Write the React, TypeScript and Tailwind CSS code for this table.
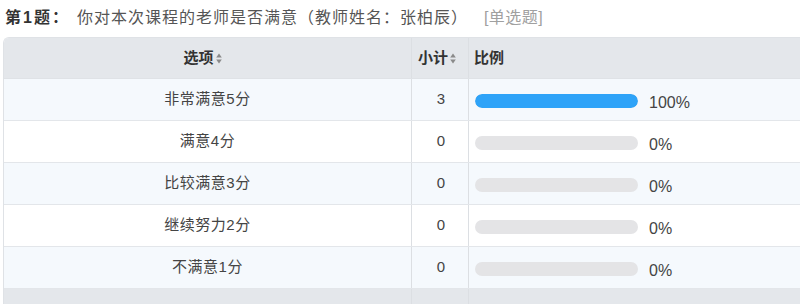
import React from "react";

const rows = [
  { label: "非常满意5分", count: 3, pct: 100 },
  { label: "满意4分", count: 0, pct: 0 },
  { label: "比较满意3分", count: 0, pct: 0 },
  { label: "继续努力2分", count: 0, pct: 0 },
  { label: "不满意1分", count: 0, pct: 0 },
];

const SortIcon = () => (
  <svg width="6" height="11" viewBox="0 0 6 11" className="ml-[2px] inline-block">
    <path d="M3 0.5 L5.8 4.5 L0.2 4.5 Z" fill="#8a8a8a" />
    <path d="M3 10.5 L5.8 6.5 L0.2 6.5 Z" fill="#8a8a8a" />
  </svg>
);

const App: React.FC = () => {
  return (
    <div
      className="w-[800px] h-[304px] overflow-hidden bg-white text-[#333]"
      style={{ fontFamily: '"Liberation Sans", "Noto Sans CJK SC", sans-serif' }}
    >
      {/* title */}
      <div className="flex items-center h-[37px] pl-[5px] pb-[1px]">
        <span className="text-[16px] font-bold text-[#333] leading-none tracking-[2px]">第1题：</span>
        <span className="ml-[7px] text-[16px] text-[#555] leading-none tracking-[1px]">
          你对本次课程的老师是否满意（教师姓名：张柏辰）
        </span>
        <span className="ml-[16px] text-[16px] text-[#a0a0a0] leading-none tracking-[0.5px]">[单选题]</span>
      </div>

      {/* table */}
      <div className="ml-[3px] w-[830px] border-l border-t border-[#dfe2e6] rounded-tl-[6px] overflow-hidden">
        <div className="flex h-[41px] bg-[#e4e7eb] border-b border-[#dfe2e6] text-[15px] font-bold">
          <div className="w-[408px] border-r border-[#dcdfe3] flex items-center justify-center pr-[10px]">
            选项<SortIcon />
          </div>
          <div className="w-[57px] border-r border-[#dcdfe3] flex items-center justify-center pr-[6px]">
            小计<SortIcon />
          </div>
          <div className="flex-1 flex items-center pl-[5px]">比例</div>
        </div>
        {rows.map((r, i) => (
          <div
            key={r.label}
            className={`flex h-[42px] border-b border-[#e3e6ea] ${i % 2 === 0 ? "bg-[#f5f9fd]" : "bg-white"}`}
          >
            <div className="w-[408px] border-r border-[#dcdfe3] flex items-center justify-center text-[15px] tracking-[0.5px] text-[#444]">
              {r.label}
            </div>
            <div className="w-[57px] border-r border-[#dcdfe3] flex items-center justify-center text-[15px] text-[#444] pl-[2px]">
              {r.count}
            </div>
            <div className="flex-1 flex items-center pl-[6px] pt-[3px]">
              <div className="w-[163px] h-[14px] rounded-full bg-[#e4e4e6] overflow-hidden">
                <div className="h-full rounded-full bg-[#2ea3f8]" style={{ width: `${r.pct}%` }} />
              </div>
              <span className="ml-[11px] mt-[3px] text-[16px] text-[#444]">{r.pct}%</span>
            </div>
          </div>
        ))}
        <div className="flex h-[30px] bg-[#e4e7eb]">
          <div className="w-[408px] border-r border-[#dcdfe3]" />
          <div className="w-[57px] border-r border-[#dcdfe3]" />
          <div className="flex-1" />
        </div>
      </div>
    </div>
  );
};

export default App;
